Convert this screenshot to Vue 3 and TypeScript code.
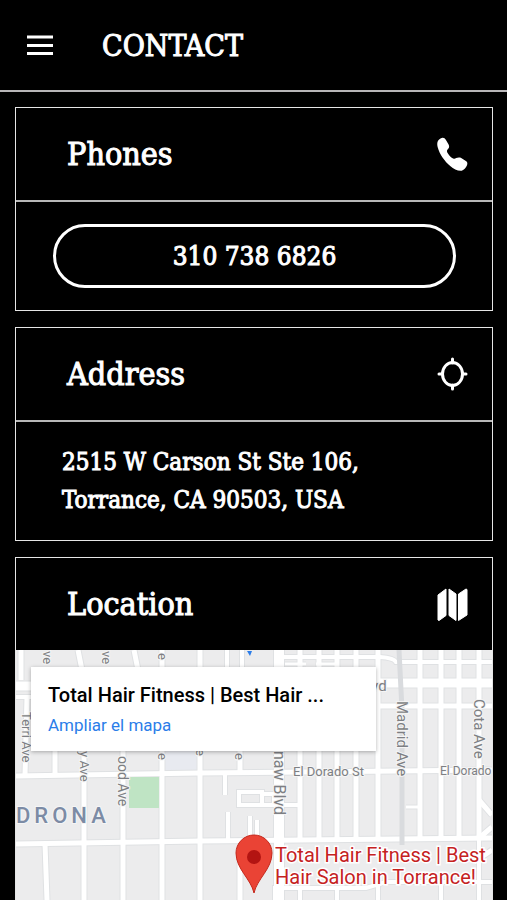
<script setup lang="ts">
interface Road {
  d: string
  w: number
}

interface StreetLabel {
  text: string
  x: number
  y: number
  size: number
  turn?: number
}

const phone = '310 738 6826'

// Map drawing units: 476 x 250, origin at the top left of the visible area.
const roads: Road[] = [
  { d: 'M0 36H16M360 33H476', w: 9 },
  { d: 'M0 47H16', w: 4 },
  { d: 'M0 126L184 123L476 120', w: 5 },
  { d: 'M0 194L184 191L476 188', w: 5 },
  { d: 'M5 0V30M11 47L9 125M39 95V124M29 194L31 250', w: 5 },
  { d: 'M62 0L66 20M118 0L122 20', w: 5 },
  { d: 'M68 95V250M107 95V250M146 0V250M184 0V250M224 95V124M224 200V250', w: 5 },
  { d: 'M211 0V20M226 0V20M209 125V145M212 162V190M234 166V190M241 170V190', w: 4 },
  { d: 'M223 142H246V155H223ZM246 144H258V155M246 155H284', w: 4 },
  { d: 'M268 7H364Q378 8 380 12H476', w: 4 },
  { d: 'M360 56H476', w: 5 },
  { d: 'M284 0V188M303 0V188M321 0V188M340 0V188M362 0V188M404 0V188M425 0V188M443 0V188M463 0V188', w: 5 },
  { d: 'M390 157H404M269 14H290M300 14H320', w: 3 },
  { d: 'M463 150L476 165M476 177L462 189M476 200L458 212', w: 5 },
  { d: 'M259 250V238H350L370 232H476M284 240V250M321 240V250M362 232V250M425 232V250M463 190V250', w: 4 },
]

const labels: StreetLabel[] = [
  { text: 've', x: 27, y: 1, size: 13, turn: 90 },
  { text: 've', x: 86, y: 1, size: 13, turn: 90 },
  { text: 'e', x: 142, y: 3, size: 13, turn: 90 },
  { text: 'Terri Ave', x: 6, y: 62, size: 13, turn: 90 },
  { text: 'y Ave', x: 64, y: 101, size: 13, turn: 90 },
  { text: 'ood Ave', x: 102, y: 106, size: 14, turn: 90 },
  { text: 'e', x: 142, y: 103, size: 13, turn: 90 },
  { text: 'e', x: 180, y: 99, size: 13, turn: 90 },
  { text: 'e', x: 219, y: 103, size: 13, turn: 90 },
  { text: 'naw Blvd', x: 258, y: 101, size: 16, turn: 90 },
  { text: 'Madrid Ave', x: 381, y: 51, size: 15, turn: 90 },
  { text: 'Cota Ave', x: 458, y: 49, size: 15, turn: 90 },
  { text: 'vd', x: 355, y: 41, size: 15 },
  { text: 'El Dorado St', x: 277, y: 126, size: 13 },
  { text: 'El Dorado', x: 424, y: 125, size: 12 },
]
</script>

<template>
  <div class="page">
    <header class="topbar">
      <button class="menu" type="button" aria-label="Menu">
        <svg viewBox="0 0 26 20" width="26" height="20" aria-hidden="true">
          <path d="M0 2H26M0 10.500H26M0 18.500H26" stroke="#fff" stroke-width="3" />
        </svg>
      </button>
      <h1>CONTACT</h1>
    </header>

    <main>
      <section class="card">
        <div class="head">
          <h2>Phones</h2>
          <svg viewBox="0 0 32 36" width="32" height="36" aria-hidden="true">
            <path
              fill="#fff"
              d="M1.500 6C2 3.900 4.500 2 6.500 1.700C8 1.500 9 2.500 9.800 3.700L12.600 8.500C13.500 10.300 13.200 11.800 12.200 12.800L11.200 14C10.800 14.900 11 16 11.600 17C13.400 20.100 15.400 21.900 17.800 22.700C18.800 23 19.400 22.400 20.100 22C21.500 21.300 23.500 21.200 24.800 21.700L29.900 25C31.400 26 31.700 27.400 31.100 29C30.200 31.400 28.200 34 25.700 34.700C22 35.200 17.500 32.800 14.500 30.200C8.500 25.200 3.500 18 1.700 11.200C1.200 9.200 1.100 7.600 1.500 6Z"
            />
          </svg>
        </div>
        <div class="body phones">
          <a class="pill" href="tel:3107386826">{{ phone }}</a>
        </div>
      </section>

      <section class="card">
        <div class="head">
          <h2>Address</h2>
          <svg viewBox="0 0 32 36" width="32" height="36" aria-hidden="true">
            <g fill="none" stroke="#fff" stroke-width="3">
              <ellipse cx="16.500" cy="18" rx="10" ry="11.500" />
              <path d="M16.500 3V7M16.500 29V33M3 18H6M27 18H30" stroke-linecap="round" />
            </g>
          </svg>
        </div>
        <p class="body address">2515 W Carson St Ste 106,<br />Torrance, CA 90503, USA</p>
      </section>

      <section class="card location">
        <div class="head">
          <h2>Location</h2>
          <svg viewBox="0 0 32 36" width="32" height="36" aria-hidden="true">
            <g fill="#fff" stroke="#fff" stroke-width="1" stroke-linejoin="round">
              <path d="M2 9L10 3V29.500L3 34.500L2 34Z" />
              <path d="M13 3L20 8V34.500L13 29.500Z" />
              <path d="M22.500 8L30 3L31 3.500V29L22.500 34.500Z" />
            </g>
          </svg>
        </div>
        <div class="map">
          <svg class="streets" viewBox="0 0 476 250" preserveAspectRatio="xMinYMin slice" role="img" aria-label="Map">
            <rect width="476" height="250" fill="#ececed" />
            <rect x="148" y="95" width="35" height="27" fill="#e8eaf0" />
            <g fill="none" stroke="#dfe1e3">
              <path v-for="(road, i) in roads" :key="i" :d="road.d" :stroke-width="road.w + 2" />
              <path d="M263 0V250" stroke-width="12" />
            </g>
            <rect x="113" y="127" width="30" height="31" fill="#bfe4c4" />
            <g fill="none" stroke="#fff">
              <path v-for="(road, i) in roads" :key="i" :d="road.d" :stroke-width="road.w" />
              <path d="M263 0V250" stroke-width="10" />
            </g>
            <path d="M383 0L386 60V195" fill="none" stroke="#d9dbde" stroke-width="5" />
            <path d="M231 1H236L234 6Z" fill="#2b7de9" />
            <text
              v-for="(label, i) in labels"
              :key="i"
              class="street"
              :font-size="label.size"
              :transform="`translate(${label.x} ${label.y}) rotate(${label.turn ?? 0})`"
            >{{ label.text }}</text>
            <text class="district" x="0" y="173">DRONA</text>
            <path
              d="M238 243C235 229 220 219 220 203A18 18 0 0 1 256 203C256 219 241 229 238 243Z"
              fill="#ea4335"
              stroke="#c5281c"
            />
            <circle cx="238" cy="207" r="7" fill="#b31412" />
            <text class="place" x="259" y="212">Total Hair Fitness | Best</text>
            <text class="place" x="259" y="234">Hair Salon in Torrance!</text>
          </svg>
          <div class="info">
            <strong>Total Hair Fitness | Best Hair ...</strong>
            <a href="#map">Ampliar el mapa</a>
          </div>
        </div>
      </section>
    </main>
  </div>
</template>

<style>
body {
  margin: 0;
  background: #000;
}
</style>

<style scoped>
.page {
  color: #fff;
  background: #000;
  font-family: "DejaVu Serif Condensed", "DejaVu Serif", serif;
}

.topbar {
  display: flex;
  align-items: center;
  gap: 49px;
  height: 90px;
  padding: 0 27px;
  border-bottom: 2px solid #b8b6b8;
}

.menu {
  display: flex;
  padding: 0;
  border: 0;
  background: none;
}

h1,
h2 {
  margin: 0;
  font-weight: 400;
}

h1,
h2,
.pill,
.address {
  -webkit-text-stroke: 1px #fff;
}

h1 {
  font-size: 30px;
}

h2 {
  font-size: 32px;
}

main {
  display: flex;
  flex-direction: column;
  gap: 16px;
  padding: 15px 14px 0 15px;
}

.card {
  border: 1px solid #e6e6e6;
}

.head {
  display: flex;
  align-items: center;
  justify-content: space-between;
  height: 92px;
  padding: 0 24px 0 51px;
}

.body {
  border-top: 2px solid #b8b8b8;
}

.phones {
  padding: 22px 36px 22px 37px;
}

.pill {
  display: block;
  border: 3px solid #fff;
  border-radius: 32px;
  color: #fff;
  font-size: 26px;
  line-height: 58px;
  text-align: center;
  text-decoration: none;
}

.address {
  margin: 0;
  padding: 21px 46px;
  font-size: 24px;
  line-height: 38px;
}

.location {
  border-bottom: 0;
}

.map {
  position: relative;
  height: 250px;
  overflow: hidden;
  font-family: Roboto, "Liberation Sans", sans-serif;
}

.streets {
  display: block;
  width: 100%;
  height: 100%;
}

.street {
  fill: #7d7f83;
  stroke: #f5f5f5;
  stroke-width: 2px;
  paint-order: stroke;
}

.district {
  fill: #7c8ba5;
  stroke: #f5f5f5;
  stroke-width: 2px;
  paint-order: stroke;
  font-size: 22px;
  font-weight: 500;
  letter-spacing: 4px;
}

.place {
  fill: #c5221f;
  stroke: #fff;
  stroke-width: 3px;
  paint-order: stroke;
  font-size: 20px;
}

.info {
  position: absolute;
  top: 17px;
  left: 15px;
  display: flex;
  flex-direction: column;
  align-items: flex-start;
  gap: 2px;
  box-sizing: border-box;
  width: 345px;
  height: 84px;
  padding: 14px 17px;
  background: #fff;
  box-shadow: 0 1px 4px #0000004d;
  white-space: nowrap;
}

.info strong {
  color: #000;
  font-size: 20px;
  font-weight: 500;
  line-height: 28px;
}

.info a {
  color: #2b7de9;
  font-size: 17px;
  line-height: 28px;
  text-decoration: none;
}
</style>
